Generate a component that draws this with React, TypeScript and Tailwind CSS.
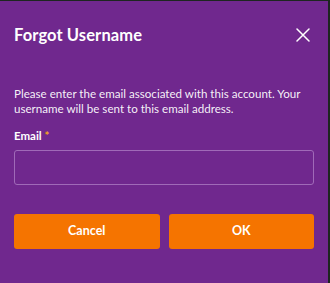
import { useState } from "react";

export default function App() {
  const [email, setEmail] = useState("");

  return (
    <div
      className="w-[330px] h-[283px] bg-[#70288e] border-t border-r-2 border-[#1d2620] text-white flex flex-col"
      style={{ fontFamily: "Lato, 'Liberation Sans', sans-serif" }}
    >
      <div className="flex items-center justify-between pl-[14px] pr-[18px] pt-[18px] h-[50px]">
        <h2 className="text-[16.5px] font-bold tracking-[0.1px]">Forgot Username</h2>
        <button className="text-white" aria-label="Close">
          <svg width="14" height="14" viewBox="0 0 14 14" fill="none" stroke="currentColor" strokeWidth="1.5" strokeLinecap="round">
            <path d="M1 1 L13 13 M13 1 L1 13" />
          </svg>
        </button>
      </div>

      <div className="px-[14px] pt-[35px]">
        <p className="text-[11.6px] leading-[15px] text-white/95">
          Please enter the email associated with this account. Your username will be sent to this email address.
        </p>

        <label className="block mt-[12px] text-[11.5px] font-bold leading-[15px]">
          Email <span className="text-[#f5a623]">*</span>
        </label>
        <input
          className="mt-[7px] w-full h-[35px] rounded-[3px] border border-[#a06ab8] bg-transparent px-2 text-[12px] outline-none"
          value={email}
          onChange={(e) => setEmail(e.target.value)}
        />

        <div className="flex gap-[9px] mt-[29px]">
          <button className="flex-1 h-[35px] rounded-[3px] bg-[#f57400] text-[12.5px] font-bold">Cancel</button>
          <button className="flex-1 h-[35px] rounded-[3px] bg-[#f57400] text-[12.5px] font-bold">OK</button>
        </div>
      </div>
    </div>
  );
}
